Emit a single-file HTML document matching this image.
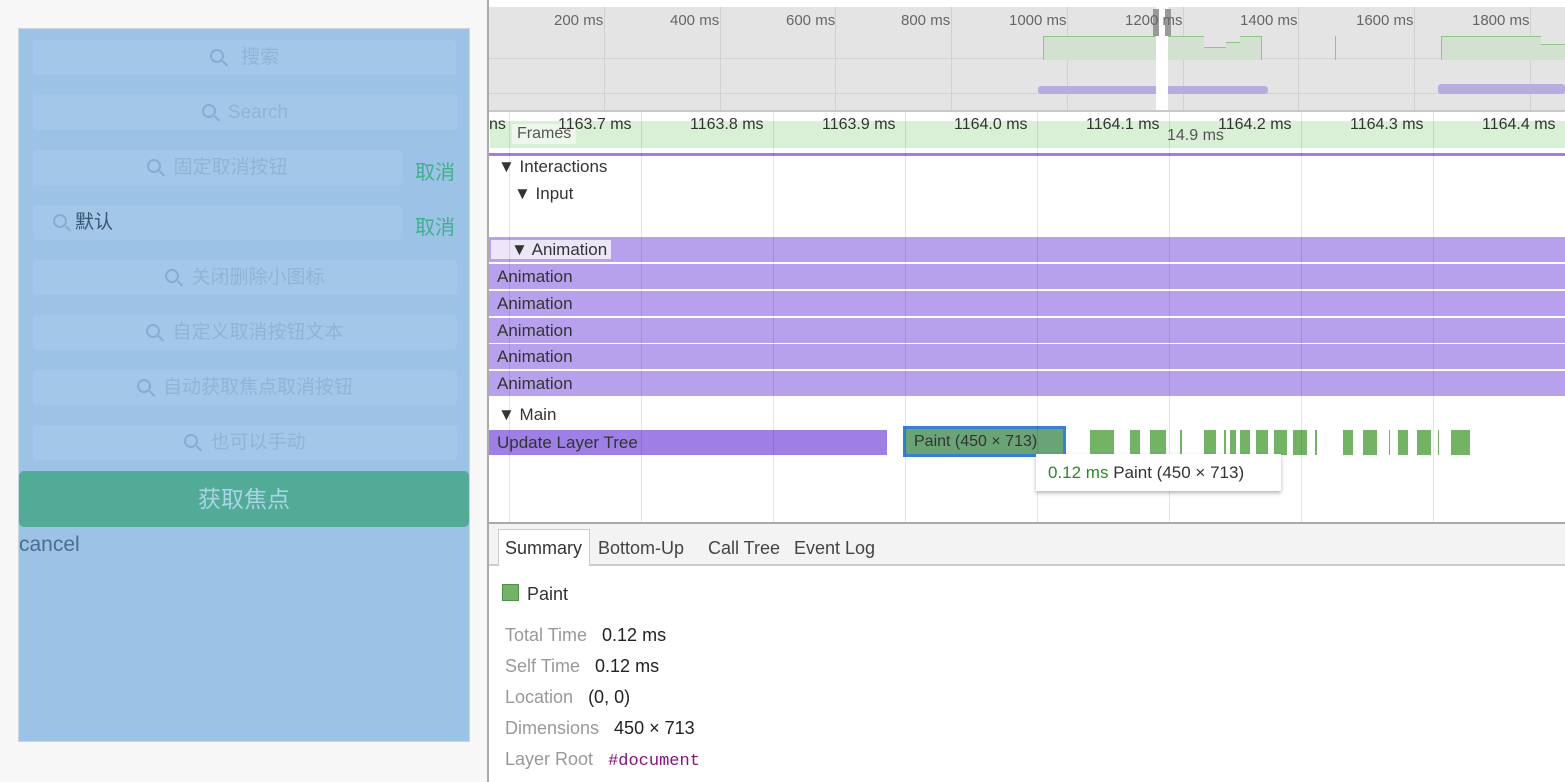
<!DOCTYPE html>
<html><head><meta charset="utf-8"><style>
*{margin:0;padding:0;box-sizing:border-box}
body{width:1565px;height:782px;position:relative;overflow:hidden;background:#fff;font-family:"Liberation Sans","Noto Sans CJK SC",sans-serif}
.a{position:absolute}
.inp{position:absolute;background:#a2c7e9;border-radius:4px;height:35px;color:#8fb4d6;font-size:19px;line-height:35px;text-align:center}
.mag{display:inline-block;width:14px;height:14px;border:2px solid #86acd0;border-radius:50%;position:relative;margin-right:12px;vertical-align:middle;top:-2px}
.mag:after{content:"";position:absolute;width:2px;height:7px;background:#86acd0;right:-4px;bottom:-6px;transform:rotate(-45deg)}
.cx{position:absolute;color:#3fb08c;font-size:20px;left:415px}
.t{font-size:16px;color:#333;position:absolute}
.anim{position:absolute;left:489px;width:1076px;height:25px;background:#b7a1ec;font-size:17px;color:#333;line-height:25px;padding-left:8px}
.vl{position:absolute;top:112px;width:1px;height:411px;background:rgba(0,0,0,0.1)}
.ov{position:absolute;top:7px;width:1px;height:103px;background:#d0d0d0}
.g{position:absolute;top:430px;height:25px;background:#74b266}
.lbl{color:#999;display:inline-block}
.s{position:absolute;left:505px;font-size:18px;color:#222}
</style></head><body>
<div class="a" style="left:0;top:0;width:487px;height:782px;background:#f7f7f7"></div>
<div class="a" style="left:18px;top:28px;width:452px;height:714px;background:#9cc2e5;border:1px solid #c8d6e2"></div>
<div class="inp" style="left:33px;top:40px;width:423px"><span class="mag"></span>&nbsp;搜索</div>
<div class="inp" style="left:33px;top:95px;width:424px"><span class="mag"></span>Search</div>
<div class="inp" style="left:33px;top:150px;width:369px"><span class="mag"></span>固定取消按钮</div>
<div class="cx" style="top:156px">取消</div>
<div class="inp" style="left:33px;top:205px;width:369px;text-align:left;padding-left:20px;color:#3a5570"><span class="mag" style="margin-right:8px"></span>默认</div>
<div class="cx" style="top:211px">取消</div>
<div class="inp" style="left:33px;top:260px;width:424px"><span class="mag"></span>关闭删除小图标</div>
<div class="inp" style="left:33px;top:315px;width:424px"><span class="mag"></span>自定义取消按钮文本</div>
<div class="inp" style="left:33px;top:370px;width:424px"><span class="mag"></span>自动获取焦点取消按钮</div>
<div class="inp" style="left:33px;top:425px;width:424px"><span class="mag"></span>也可以手动</div>
<div class="a" style="left:19px;top:471px;width:450px;height:56px;background:#51ab97;border-radius:5px;color:#a9d4e6;font-size:23px;line-height:56px;text-align:center">获取焦点</div>
<div class="a" style="left:19px;top:533px;color:#4a6d94;font-size:21px">cancel</div>

<div class="a" style="left:487px;top:0;width:2px;height:782px;background:#ababab"></div>
<div class="a" style="left:489px;top:0;width:1076px;height:7px;background:#fff"></div>
<div class="a" style="left:489px;top:7px;width:1076px;height:103px;background:#e4e4e4"></div>
<div class="ov" style="left:604px"></div><div class="ov" style="left:720px"></div><div class="ov" style="left:835px"></div><div class="ov" style="left:951px"></div><div class="ov" style="left:1067px"></div><div class="ov" style="left:1183px"></div><div class="ov" style="left:1298px"></div><div class="ov" style="left:1414px"></div><div class="ov" style="left:1530px"></div>
<div class="a" style="left:489px;top:58px;width:1076px;height:1px;background:#d4d4d4"></div>
<div class="a" style="left:489px;top:93px;width:1076px;height:1px;background:#d4d4d4"></div>
<div class="a" style="left:1043px;top:36px;width:118px;height:24px;background:#d3e2d0;border-top:1px solid #8cc784;border-left:1px solid #8cc784"></div>
<div class="a" style="left:1168px;top:36px;width:36px;height:24px;background:#d3e2d0;border-top:1px solid #8cc784"></div>
<div class="a" style="left:1204px;top:47px;width:22px;height:13px;background:#d3e2d0;border-top:1px solid #8cc784"></div>
<div class="a" style="left:1226px;top:42px;width:14px;height:18px;background:#d3e2d0;border-top:1px solid #8cc784"></div>
<div class="a" style="left:1240px;top:36px;width:22px;height:24px;background:#d3e2d0;border-top:1px solid #8cc784;border-right:1px solid #8cc784"></div>
<div class="a" style="left:1441px;top:36px;width:100px;height:24px;background:#d3e2d0;border-top:1px solid #8cc784;border-left:1px solid #8cc784"></div>
<div class="a" style="left:1541px;top:44px;width:24px;height:16px;background:#d3e2d0;border-top:1px solid #8cc784"></div>
<div class="a" style="left:1335px;top:36px;width:1px;height:24px;background:#8cc784"></div>
<div class="a" style="left:1038px;top:86px;width:230px;height:8px;background:#b9addf;border-radius:3px"></div>
<div class="a" style="left:1438px;top:84px;width:127px;height:10px;background:#b9addf;border-radius:3px"></div>
<div class="a" style="left:1156px;top:7px;width:12px;height:103px;background:#fff"></div>
<div class="a" style="left:1153px;top:9px;width:6px;height:27px;background:#999"></div>
<div class="a" style="left:1165px;top:9px;width:6px;height:27px;background:#999"></div>
<div class="t" style="left:554px;top:12px;color:#666;font-size:15px">200 ms</div>
<div class="t" style="left:670px;top:12px;color:#666;font-size:15px">400 ms</div>
<div class="t" style="left:786px;top:12px;color:#666;font-size:15px">600 ms</div>
<div class="t" style="left:901px;top:12px;color:#666;font-size:15px">800 ms</div>
<div class="t" style="left:1009px;top:12px;color:#666;font-size:15px">1000 ms</div>
<div class="t" style="left:1125px;top:12px;color:#666;font-size:15px">1200 ms</div>
<div class="t" style="left:1240px;top:12px;color:#666;font-size:15px">1400 ms</div>
<div class="t" style="left:1356px;top:12px;color:#666;font-size:15px">1600 ms</div>
<div class="t" style="left:1472px;top:12px;color:#666;font-size:15px">1800 ms</div>
<div class="a" style="left:489px;top:110px;width:1076px;height:2px;background:#c8c8c8"></div>

<div class="a" style="left:490px;top:121px;width:1075px;height:27px;background:#d9f0d7"></div>
<div class="a" style="left:512px;top:124px;width:64px;height:20px;background:#eef7ec"></div>
<div class="t" style="left:517px;top:125px;color:#555">Frames</div>
<div class="t" style="left:1167px;top:127px;color:#555">14.9 ms</div>
<div class="t" style="left:489px;top:116px">ns</div>
<div class="t" style="left:558px;top:116px">1163.7 ms</div>
<div class="t" style="left:690px;top:116px">1163.8 ms</div>
<div class="t" style="left:822px;top:116px">1163.9 ms</div>
<div class="t" style="left:954px;top:116px">1164.0 ms</div>
<div class="t" style="left:1086px;top:116px">1164.1 ms</div>
<div class="t" style="left:1218px;top:116px">1164.2 ms</div>
<div class="t" style="left:1350px;top:116px">1164.3 ms</div>
<div class="t" style="left:1482px;top:116px">1164.4 ms</div>
<div class="a" style="left:489px;top:153px;width:1076px;height:3px;background:#9f7fe6"></div>
<div class="t" style="left:498px;top:157px;font-size:17px">▼ Interactions</div>
<div class="t" style="left:514px;top:184px;font-size:17px">▼ Input</div>
<div class="anim" style="top:237px"><span style="background:#ece6f8;padding:0 4px 0 20px;margin-left:-6px">▼ Animation</span></div>
<div class="anim" style="top:264px">Animation</div>
<div class="anim" style="top:291px">Animation</div>
<div class="anim" style="top:318px">Animation</div>
<div class="anim" style="top:344px">Animation</div>
<div class="anim" style="top:371px">Animation</div>
<div class="t" style="left:498px;top:405px;font-size:17px">▼ Main</div>
<div class="a" style="left:489px;top:430px;width:398px;height:25px;background:#9e7fe6;font-size:17px;color:#333;line-height:25px;padding-left:8px">Update Layer Tree</div>
<div class="a" style="left:903px;top:426px;width:163px;height:31px;border:3px solid #3a7fd6;background:#6aa476;font-size:16px;color:#333;line-height:25px;padding-left:8px;white-space:nowrap;overflow:hidden">Paint (450 × 713)</div>
<div class="g" style="left:1090px;width:24px"></div><div class="g" style="left:1130px;width:10px"></div><div class="g" style="left:1150px;width:16px"></div><div class="g" style="left:1180px;width:2px"></div><div class="g" style="left:1204px;width:12px"></div><div class="g" style="left:1224px;width:2px"></div><div class="g" style="left:1230px;width:6px"></div><div class="g" style="left:1240px;width:10px"></div><div class="g" style="left:1256px;width:12px"></div><div class="g" style="left:1274px;width:13px"></div><div class="g" style="left:1293px;width:14px"></div><div class="g" style="left:1315px;width:2px"></div><div class="g" style="left:1343px;width:10px"></div><div class="g" style="left:1363px;width:14px"></div><div class="g" style="left:1389px;width:1px"></div><div class="g" style="left:1398px;width:10px"></div><div class="g" style="left:1417px;width:14px"></div><div class="g" style="left:1438px;width:1px"></div><div class="g" style="left:1451px;width:19px"></div>
<div class="vl" style="left:509px"></div><div class="vl" style="left:641px"></div><div class="vl" style="left:773px"></div><div class="vl" style="left:905px"></div><div class="vl" style="left:1037px"></div><div class="vl" style="left:1169px"></div><div class="vl" style="left:1301px"></div><div class="vl" style="left:1433px"></div>
<div class="a" style="left:1036px;top:454px;width:245px;height:37px;background:#fff;box-shadow:0 2px 4px rgba(0,0,0,.3);font-size:17px;line-height:37px;padding-left:12px;color:#333;white-space:nowrap"><span style="color:#2a8a2a">0.12 ms</span> Paint (450 × 713)</div>

<div class="a" style="left:489px;top:522px;width:1076px;height:2px;background:#aaa"></div>
<div class="a" style="left:489px;top:524px;width:1076px;height:42px;background:#f3f3f3;border-bottom:2px solid #ccc"></div>
<div class="a" style="left:498px;top:529px;width:92px;height:37px;background:#fff;border:1px solid #ccc;border-bottom:none"></div>
<div class="a" style="left:505px;top:538px;font-size:18px;color:#333">Summary</div>
<div class="a" style="left:598px;top:538px;font-size:18px;color:#444">Bottom-Up</div>
<div class="a" style="left:708px;top:538px;font-size:18px;color:#444">Call Tree</div>
<div class="a" style="left:794px;top:538px;font-size:18px;color:#444">Event Log</div>
<div class="a" style="left:502px;top:584px;width:17px;height:17px;background:#74b266;border:1px solid #4f8f47"></div>
<div class="a" style="left:527px;top:584px;font-size:18px;color:#333">Paint</div>
<div class="s" style="top:625px"><span class="lbl">Total Time</span>&nbsp;&nbsp; 0.12 ms</div>
<div class="s" style="top:656px"><span class="lbl">Self Time</span>&nbsp;&nbsp; 0.12 ms</div>
<div class="s" style="top:687px"><span class="lbl">Location</span>&nbsp;&nbsp; (0, 0)</div>
<div class="s" style="top:718px"><span class="lbl">Dimensions</span>&nbsp;&nbsp; 450 × 713</div>
<div class="s" style="top:749px"><span class="lbl">Layer Root</span>&nbsp;&nbsp; <span style="color:#881280;font-family:'Liberation Mono',monospace;font-size:17px">#document</span></div>
</body></html>
